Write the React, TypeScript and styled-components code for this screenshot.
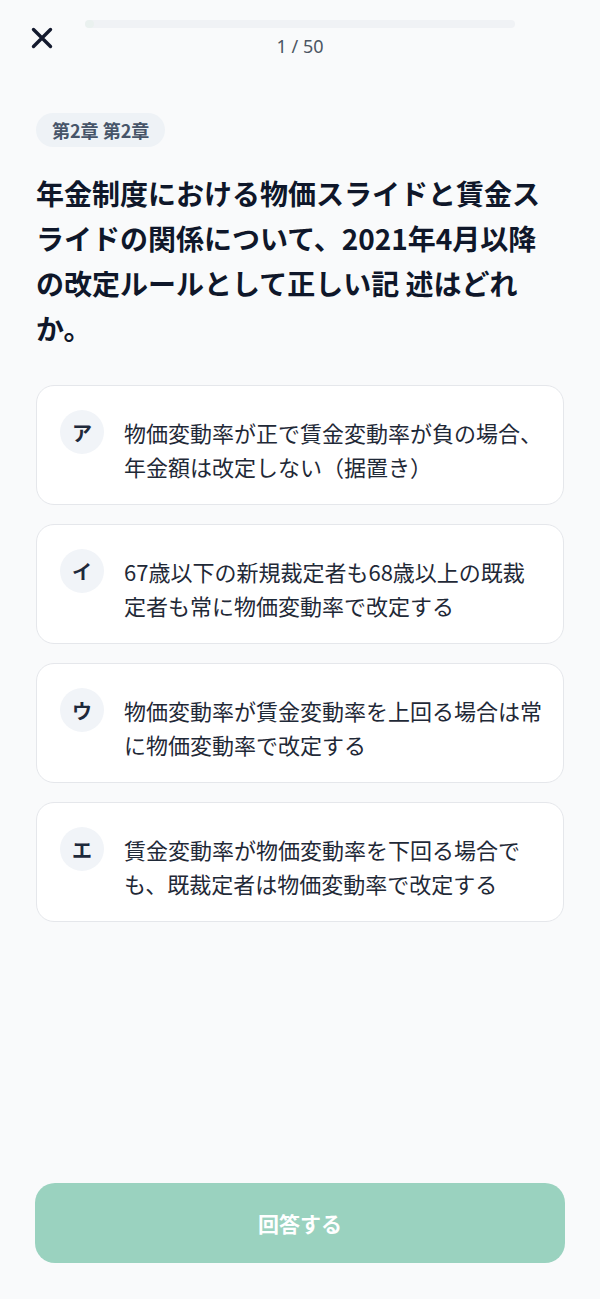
import React from "react";
import styled, { createGlobalStyle } from "styled-components";

const GlobalStyle = createGlobalStyle`
  html, body {
    margin: 0;
    padding: 0;
    background: #f9fafb;
  }
  body {
    font-family: "Noto Sans CJK JP", "Noto Sans", sans-serif;
    color: #0f172a;
  }
  * {
    box-sizing: border-box;
  }
`;

interface IChoice {
  label: string;
  text: string;
}

const CHOICES: IChoice[] = [
  { label: "ア", text: "物価変動率が正で賃金変動率が負の場合、年金額は改定しない（据置き）" },
  { label: "イ", text: "67歳以下の新規裁定者も68歳以上の既裁定者も常に物価変動率で改定する" },
  { label: "ウ", text: "物価変動率が賃金変動率を上回る場合は常に物価変動率で改定する" },
  { label: "エ", text: "賃金変動率が物価変動率を下回る場合でも、既裁定者は物価変動率で改定する" }
];

const CURRENT = 1;
const TOTAL = 50;

const CloseIcon = () => (
  <svg width="22" height="22" viewBox="0 0 22 22" fill="none">
    <path d="M2.5 2.5 19.5 19.5M19.5 2.5 2.5 19.5" stroke="#141a2e" strokeWidth="3.4" strokeLinecap="round" />
  </svg>
);

const App = () => {
  return (
    <>
      <GlobalStyle />
      <Page>
        <Header>
          <CloseButton aria-label="閉じる">
            <CloseIcon />
          </CloseButton>
          <Progress>
            <Track>
              <Fill style={{ width: `${(CURRENT / TOTAL) * 100}%` }} />
            </Track>
            <Counter>
              {CURRENT} / {TOTAL}
            </Counter>
          </Progress>
          <HeaderSpacer />
        </Header>

        <Main>
          <ChapterTag>第2章 第2章</ChapterTag>
          <Question>
            年金制度における物価スライドと賃金スライドの関係について、2021年4月以降の改定ルールとして正しい記 述はどれか。
          </Question>

          <ChoiceList>
            {CHOICES.map((choice) => (
              <ChoiceCard key={choice.label} type="button">
                <ChoiceBadge>{choice.label}</ChoiceBadge>
                <ChoiceText>{choice.text}</ChoiceText>
              </ChoiceCard>
            ))}
          </ChoiceList>
        </Main>

        <Footer>
          <SubmitButton type="button" disabled>
            回答する
          </SubmitButton>
        </Footer>
      </Page>
    </>
  );
};

const Page = styled.div`
  min-height: 100vh;
  display: flex;
  flex-direction: column;
  background: #f9fafb;
`;

const Header = styled.header`
  display: flex;
  align-items: flex-start;
  gap: 25px;
  padding: 20px 24px 0;
`;

const CloseButton = styled.button`
  width: 36px;
  height: 36px;
  flex-shrink: 0;
  display: flex;
  align-items: center;
  justify-content: center;
  padding: 0;
  border: none;
  background: transparent;
  cursor: pointer;
`;

const HeaderSpacer = styled.div`
  width: 36px;
  flex-shrink: 0;
`;

const Progress = styled.div`
  flex: 1;
  display: flex;
  flex-direction: column;
  align-items: center;
  gap: 7px;
`;

const Track = styled.div`
  width: 100%;
  height: 8px;
  border-radius: 4px;
  background: #f0f2f5;
  overflow: hidden;
`;

const Fill = styled.div`
  height: 100%;
  border-radius: 4px;
  background: #eaf1ef;
`;

const Counter = styled.div`
  font-family: "Noto Sans", "Noto Sans CJK JP", sans-serif;
  font-size: 18px;
  line-height: 22px;
  color: #4b5563;
`;

const Main = styled.main`
  display: flex;
  flex-direction: column;
  align-items: flex-start;
  padding: 56px 36px 0;
`;

const ChapterTag = styled.span`
  display: inline-block;
  padding: 6px 16px;
  border-radius: 17px;
  background: #eef2f6;
  color: #475569;
  font-size: 18px;
  font-weight: 700;
  line-height: 22px;
`;

const Question = styled.h1`
  width: 100%;
  margin: 24px 0 34px;
  font-size: 28px;
  font-weight: 700;
  line-height: 45px;
  color: #0f172a;
`;

const ChoiceList = styled.div`
  width: 100%;
  display: flex;
  flex-direction: column;
  gap: 19px;
`;

const ChoiceCard = styled.button`
  width: 100%;
  display: flex;
  align-items: flex-start;
  gap: 20px;
  padding: 24px 18px 21px 23px;
  border: 1px solid #e5e7eb;
  border-radius: 18px;
  background: #ffffff;
  font-family: inherit;
  text-align: left;
  cursor: pointer;
`;

const ChoiceBadge = styled.span`
  width: 44px;
  height: 44px;
  flex-shrink: 0;
  display: flex;
  align-items: center;
  justify-content: center;
  border-radius: 50%;
  background: #f1f4f8;
  color: #1e293b;
  font-size: 20px;
  font-weight: 700;
`;

const ChoiceText = styled.span`
  flex: 1;
  padding-top: 5px;
  font-size: 22px;
  line-height: 34px;
  color: #1f2937;
`;

const Footer = styled.footer`
  margin-top: auto;
  padding: 24px 35px 36px;
`;

const SubmitButton = styled.button`
  width: 100%;
  height: 80px;
  border: none;
  border-radius: 20px;
  background: #9ad2bf;
  color: #ffffff;
  font-family: inherit;
  font-size: 21px;
  font-weight: 700;
  cursor: pointer;

  &:disabled {
    cursor: default;
  }
`;

export default App;
